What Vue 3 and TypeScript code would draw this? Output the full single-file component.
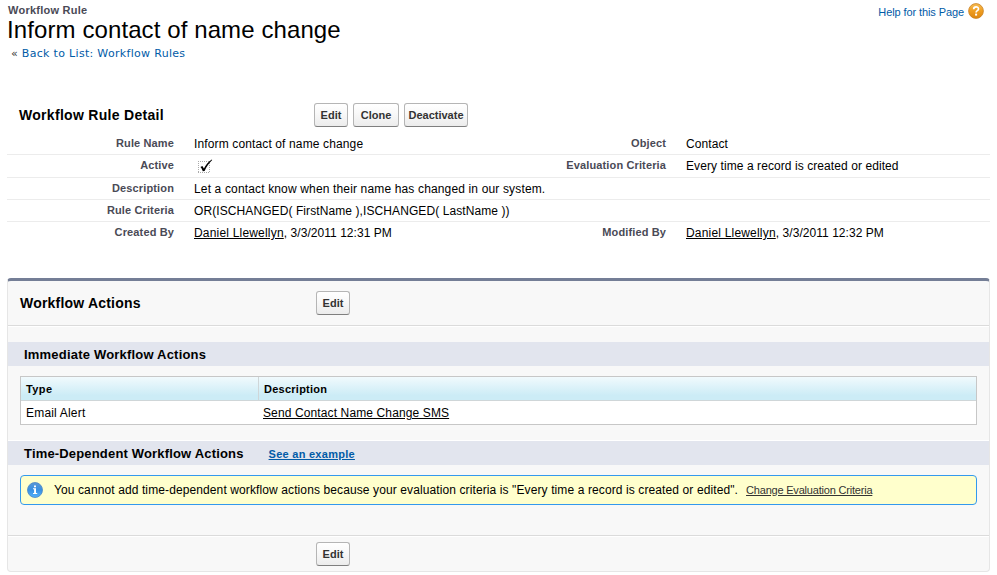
<script setup lang="ts">
interface Field {
  label: string
  value?: string
  kind?: 'text' | 'check' | 'user'
  cls?: string
}
interface DetailRow {
  left: Field
  right?: Field
}

const buttons: { text: string; cls: string }[] = [
  { text: 'Edit', cls: 'edit' },
  { text: 'Clone', cls: 'clone' },
  { text: 'Deactivate', cls: 'deactivate' },
]

const rows: DetailRow[] = [
  {
    left: { label: 'Rule Name', value: 'Inform contact of name change', cls: 'v-name' },
    right: { label: 'Object', value: 'Contact', cls: 'v-object' },
  },
  {
    left: { label: 'Active', kind: 'check' },
    right: { label: 'Evaluation Criteria', value: 'Every time a record is created or edited', cls: 'v-eval' },
  },
  { left: { label: 'Description', value: 'Let a contact know when their name has changed in our system.', cls: 'v-desc' } },
  { left: { label: 'Rule Criteria', value: 'OR(ISCHANGED( FirstName ),ISCHANGED( LastName ))', cls: 'v-crit' } },
  {
    left: { label: 'Created By', value: '3/3/2011 12:31 PM', kind: 'user', cls: 'v-user' },
    right: { label: 'Modified By', value: '3/3/2011 12:32 PM', kind: 'user', cls: 'v-user' },
  },
]
</script>

<template>
  <main class="page">
    <header class="top">
      <div class="titles">
        <div class="kind">Workflow Rule</div>
        <h1>Inform contact of name change</h1>
        <div class="back"><span class="laquo">«</span> <a>Back to List: Workflow Rules</a></div>
      </div>
      <a class="help">
        <span>Help for this Page</span>
        <svg width="16" height="16" viewBox="0 0 16 16">
          <defs>
            <linearGradient id="helpFill" x1="0" y1="0" x2="0" y2="1">
              <stop offset="0" stop-color="#f6bd55" />
              <stop offset="0.5" stop-color="#ef9d20" />
              <stop offset="1" stop-color="#dd8610" />
            </linearGradient>
          </defs>
          <circle cx="8" cy="8" r="7.4" fill="url(#helpFill)" stroke="#c98225" stroke-width="0.8" />
          <path d="M5.7 6.2C5.7 3.2 10.5 3.2 10.5 5.9C10.5 7.6 8.1 7.6 8.1 9.4" fill="none" stroke="#fff" stroke-width="1.7" />
          <rect x="7.1" y="10.6" width="2" height="2" fill="#fff" />
        </svg>
      </a>
    </header>

    <section class="detail">
      <div class="bar">
        <h2 class="t-detail">Workflow Rule Detail</h2>
        <div class="buttons">
          <button v-for="b in buttons" :key="b.text" :class="['btn', b.cls]"><span>{{ b.text }}</span></button>
        </div>
      </div>
      <div class="rows">
        <div v-for="(row, i) in rows" :key="i" :class="['row', 'r' + i]">
          <template v-for="(f, j) in [row.left, row.right]" :key="j">
            <template v-if="f">
              <div class="label">{{ f.label }}</div>
              <div class="value">
                <svg v-if="f.kind === 'check'" class="check" width="21" height="16" viewBox="0 0 21 16">
                  <path d="M4 3.5H16M4 14.5H16M4.5 3V15M15.5 3V15" fill="none" stroke="#aaa" stroke-dasharray="1 1" />
                  <path d="M6.4 8.9L8.4 8.1L9.9 10.4C12 6.6 14.5 3.5 17.8 1.4L18.2 1.9C15 5 12.6 8.4 10.6 13L8.8 13.2C8.2 11.4 7.4 9.8 6.4 8.9Z" fill="#000" />
                </svg>
                <span v-else :class="f.cls"><template v-if="f.kind === 'user'"><a class="ul">Daniel Llewellyn</a>, </template>{{ f.value }}</span>
              </div>
            </template>
          </template>
        </div>
      </div>
    </section>

    <section class="panel">
      <div class="panel-bar">
        <h2 class="t-actions">Workflow Actions</h2>
        <button class="btn edit"><span>Edit</span></button>
      </div>
      <div class="band first"><h3 class="t-imm">Immediate Workflow Actions</h3></div>
      <div class="grid">
        <div class="gh"><span class="t-type">Type</span></div>
        <div class="gh second"><span class="t-dh">Description</span></div>
        <div class="gd"><span class="t-email">Email Alert</span></div>
        <div class="gd second"><a class="ul t-send">Send Contact Name Change SMS</a></div>
      </div>
      <div class="band timed">
        <h3 class="t-time">Time-Dependent Workflow Actions</h3>
        <a class="example">See an example</a>
      </div>
      <div class="notice">
        <svg width="16" height="16" viewBox="0 0 16 16">
          <defs>
            <linearGradient id="infoFill" x1="0" y1="0" x2="0" y2="1">
              <stop offset="0" stop-color="#5b98d5" />
              <stop offset="0.5" stop-color="#3990e3" />
              <stop offset="1" stop-color="#55b2fa" />
            </linearGradient>
          </defs>
          <circle cx="8" cy="8" r="7.5" fill="url(#infoFill)" stroke="#4b86c4" stroke-width="0.8" />
          <path d="M7 3.6H9V5.3H7ZM6 6.3H9V11H10.2V12H6V11H7.1V7.3H6Z" fill="#fff" />
        </svg>
        <span class="msg">You cannot add time-dependent workflow actions because your evaluation criteria is "Every time a record is created or edited".</span>
        <a class="ul change">Change Evaluation Criteria</a>
      </div>
      <div class="panel-foot"><button class="btn edit"><span>Edit</span></button></div>
    </section>
  </main>
</template>

<style>
body {
  margin: 0;
  background: #fff;
}
</style>

<style scoped>
.page {
  box-sizing: border-box;
  width: 997px;
  height: 575px;
  padding: 0 7px;
  overflow: hidden;
  font-family: 'Liberation Sans', Arial, sans-serif;
  font-size: 12px;
  color: #000;
  white-space: nowrap;
}
h1, h2, h3 {
  margin: 0;
}
.top {
  display: flex;
  justify-content: space-between;
  height: 98px;
}
.kind {
  padding-top: 3px;
  padding-left: 1px;
  font-size: 11px;
  font-weight: bold;
  line-height: 14px;
  letter-spacing: 0.24px;
  color: #4a4a56;
}
h1 {
  font-size: 24px;
  font-weight: normal;
  line-height: 26px;
  letter-spacing: 0.1px;
}
.back {
  padding-left: 4px;
  font-family: 'DejaVu Sans', Verdana, sans-serif;
  font-size: 11px;
  line-height: 22px;
  letter-spacing: 0.31px;
  color: #333;
}
.back a,
.help {
  color: #015ba7;
}
.help {
  display: flex;
  height: 16px;
  padding: 3px 6px 0 0;
  gap: 4px;
  font-size: 11px;
  line-height: 19px;
  letter-spacing: -0.1px;
}
.bar {
  display: flex;
  align-items: center;
  height: 34px;
  padding-left: 12px;
}
h2 {
  font-size: 14px;
  line-height: 20px;
}
.bar h2 {
  width: 295px;
}
.t-detail {
  letter-spacing: 0.3px;
}
.t-actions {
  letter-spacing: 0.2px;
}
.buttons {
  display: flex;
  gap: 5px;
}
.btn {
  box-sizing: border-box;
  display: flex;
  align-items: center;
  justify-content: center;
  height: 24px;
  padding: 0;
  border: 1px solid #b5b5b5;
  border-bottom-color: #7f7f7f;
  border-radius: 3px;
  background: linear-gradient(#fff, #f9f9f9 40%, #ececec);
  font: bold 11px/14px 'Liberation Sans', Arial, sans-serif;
  color: #333;
}
.edit {
  width: 34px;
}
.clone {
  width: 46px;
}
.deactivate {
  width: 64px;
}
.row {
  box-sizing: border-box;
  display: grid;
  grid-template-columns: 167px 325px 167px 1fr;
  height: 22px;
  width: 983px;
  border-bottom: 1px solid #ececec;
}
.r0, .r1 {
  height: 23px;
}
.r4 {
  border: 0;
}
.label {
  font-size: 11px;
  font-weight: bold;
  line-height: 22px;
  text-align: right;
  letter-spacing: 0.13px;
  color: #4a4a56;
}
.value {
  padding-left: 20px;
  line-height: 24px;
}
.r1 .label, .r2 .label, .r3 .label, .r4 .label {
  line-height: 21px;
}
.r1 .value, .r2 .value, .r3 .value, .r4 .value {
  line-height: 22px;
}
.v-name {
  letter-spacing: 0.13px;
}
.v-object {
  letter-spacing: 0.1px;
}
.v-eval {
  letter-spacing: 0.08px;
}
.v-desc {
  letter-spacing: 0.15px;
}
.v-crit {
  letter-spacing: 0.09px;
}
.v-user {
  letter-spacing: 0.05px;
}
.v-user a {
  letter-spacing: 0.19px;
}
.check {
  display: block;
  margin-top: 3px;
}
.ul {
  text-decoration: underline;
}
.panel {
  box-sizing: border-box;
  width: 983px;
  height: 294px;
  margin-top: 34px;
  border: 1px solid #e6e6e6;
  border-top: 3px solid #747e96;
  border-radius: 4px;
  background: #f8f8f8;
}
.panel-bar {
  display: flex;
  align-items: center;
  box-sizing: border-box;
  height: 46px;
  padding: 0 0 1px 12px;
  border-bottom: 1px solid #fff;
  box-shadow: inset 0 -1px #dbdbdb;
}
.panel-bar h2 {
  width: 296px;
}
.band {
  display: flex;
  align-items: center;
  box-sizing: border-box;
  height: 24px;
  padding: 2px 0 0 16px;
  background: #e2e5ee;
}
.first {
  margin-top: 15px;
}
h3 {
  font-size: 13px;
  line-height: 20px;
}
.t-imm {
  letter-spacing: 0.2px;
}
.t-time {
  letter-spacing: 0.17px;
}
.grid {
  display: grid;
  grid-template-columns: 237px 1fr;
  margin: 10px 12px 15px;
  border: 1px solid #c7c7c7;
  background: #fff;
}
.gh {
  height: 23px;
  padding-left: 5px;
  border-bottom: 1px solid #cfd6d8;
  background: linear-gradient(#f1fafd, #ccecf6 80%, #ccecf6);
  font-size: 11px;
  font-weight: bold;
  line-height: 25px;
  letter-spacing: 0.25px;
}
.gh.second {
  border-left: 1px solid #cfd6d8;
}
.gd {
  height: 23px;
  padding-left: 5px;
  line-height: 24px;
}
.t-type {
  letter-spacing: 0.4px;
}
.t-email {
  letter-spacing: 0.19px;
}
.t-send {
  letter-spacing: 0.12px;
}
.timed {
  height: 25px;
  border-top: 1px solid #fff;
}
.example {
  margin-left: 25px;
  font-size: 11px;
  font-weight: bold;
  letter-spacing: 0.27px;
  color: #015ba7;
  text-decoration: underline;
}
.notice {
  display: flex;
  align-items: center;
  box-sizing: border-box;
  height: 30px;
  margin: 10px 12px 30px;
  padding-left: 6px;
  border: 1px solid #39e;
  border-radius: 4px;
  background: #ffc;
}
.msg {
  margin-left: 11px;
  letter-spacing: 0.108px;
}
.change {
  margin-left: 8px;
  font-size: 11px;
  letter-spacing: -0.2px;
  color: #333;
}
.panel-foot {
  display: flex;
  padding: 6px 0 0 308px;
  border-top: 1px solid #dbdbdb;
  box-shadow: inset 0 1px #fff;
}
</style>
